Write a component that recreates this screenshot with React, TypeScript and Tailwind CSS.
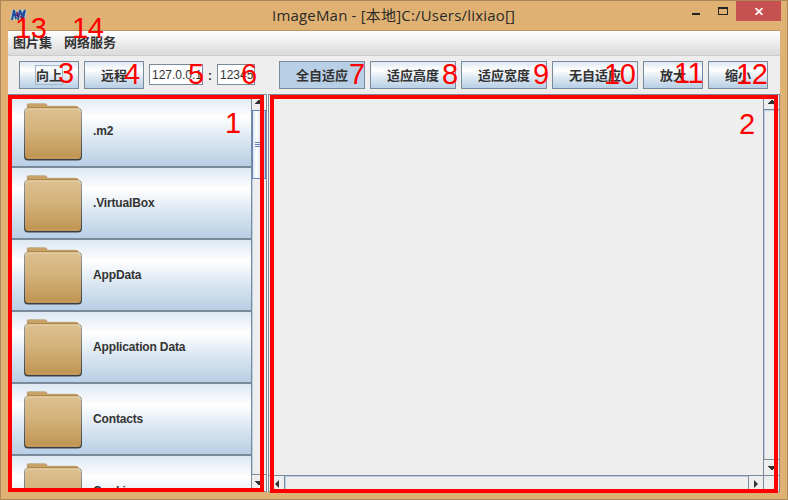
import React from "react";

const GRAD =
  "bg-[linear-gradient(to_bottom,#dde8f3_0%,#ffffff_30%,#dde8f3_60%,#b8cfe5_100%)]";

function ToolButton({ label, width, active, focus }: { label: string; width: string; active?: boolean; focus?: boolean }) {
  return (
    <button
      className={`flex h-7 shrink-0 items-center justify-center border border-[#7a8a99] ${width} ${active ? "bg-[#b8cfe5]" : GRAD}`}
    >
      <span className={focus ? "flex h-[18px] items-center outline outline-1 outline-[#a3b8cc]" : "flex h-[18px] items-center"}>{label}</span>
    </button>
  );
}

function Folder() {
  return (
    <svg width="62" height="62" viewBox="0 0 62 62" className="shrink-0">
      <defs>
        <linearGradient id="front" x1="0" y1="0" x2="0" y2="1">
          <stop offset="0" stopColor="#dcc08f" />
          <stop offset="0.45" stopColor="#d3b27b" />
          <stop offset="1" stopColor="#c09350" />
        </linearGradient>
        <linearGradient id="edge" x1="0" y1="0" x2="0" y2="1">
          <stop offset="0" stopColor="#8f969c" />
          <stop offset="1" stopColor="#2c3138" />
        </linearGradient>
        <filter id="soft" x="-10%" y="-10%" width="120%" height="120%">
          <feGaussianBlur stdDeviation="0.7" />
        </filter>
      </defs>
      <rect x="2" y="8" width="58" height="52.5" rx="4" fill="url(#edge)" opacity="0.9" filter="url(#soft)" />
      <path d="M5 11V5Q5 3.5 6.5 3.5H23Q25 3.5 25.5 6H54Q56 6 57 9V12H5Z" fill="#c8a369" stroke="#a99a7f" strokeOpacity="0.6" strokeWidth="0.6" />
      <path d="M5.5 7.5H56.5" stroke="#b18748" strokeWidth="1" />
      <rect x="3" y="8.5" width="56" height="50.5" rx="3.5" fill="url(#front)" />
      <path d="M3.5 12Q3.5 9 6.5 9H55.5Q58.5 9 58.5 12" fill="none" stroke="#ead5ae" strokeWidth="1" />
      <path d="M5 57.5H57" stroke="#c99d5d" strokeWidth="1" />
    </svg>
  );
}

function Arrow({ dir }: { dir: "up" | "down" | "left" | "right" }) {
  const paths = {
    up: "M4 0H5V1H6V2H7V3H8V4H0V3H1V2H2V1H3V0Z",
    down: "M0 0H8V1H7V2H6V3H5V4H3V3H2V2H1V1H0Z",
    left: "M0 4L4 0V8Z",
    right: "M4 4L0 0V8Z",
  };
  const flat = dir === "up" || dir === "down";
  return (
    <svg width={flat ? 8 : 4} height={flat ? 4 : 8} className="shrink-0">
      <path d={paths[dir]} fill="#333333" />
    </svg>
  );
}

const folders = [".m2", ".VirtualBox", "AppData", "Application Data", "Contacts", "Cookies"];

const marks = [
  { text: "13", place: "left-[15px] top-[12px]" },
  { text: "14", place: "left-[72px] top-[12px]" },
  { text: "3", place: "left-[58px] top-[57px]" },
  { text: "4", place: "left-[124px] top-[58px]" },
  { text: "5", place: "left-[188px] top-[58px]" },
  { text: "6", place: "left-[241px] top-[58px]" },
  { text: "7", place: "left-[349px] top-[58px]" },
  { text: "8", place: "left-[442px] top-[58px]" },
  { text: "9", place: "left-[533px] top-[58px]" },
  { text: "10", place: "left-[604px] top-[58px]" },
  { text: "11", place: "left-[674px] top-[57px]" },
  { text: "12", place: "left-[736px] top-[58px]" },
  { text: "1", place: "left-[225px] top-[107px]" },
  { text: "2", place: "left-[739px] top-[108px]" },
];

export default function App() {
  return (
    <div className="relative flex h-[500px] w-[788px] flex-col overflow-hidden border border-[#ab8757] bg-[#dfb274] px-[7px] pb-[7px] font-['Liberation_Sans','Noto_Sans_CJK_SC',sans-serif] text-[13px] font-bold leading-none text-[#333333]">
      <header className="flex h-[29px] shrink-0 items-start font-normal">
        <svg width="19" height="16" viewBox="0 0 19 16" className="ml-[1px] mt-[6px]">
          <path d="M3 13L5 3M5 3L7 12M9 13L11 3M3 8H9M11 3L13 9L16 3L14 12" stroke="#b3cfd2" strokeWidth="4" fill="none" />
          <path d="M3 13L5 3M5 3L7 12M9 13L11 3M3 8H9M11 3L13 9L16 3L14 12" stroke="#244c9a" strokeWidth="1.9" fill="none" />
          <path d="M8 5L9 10M12 9L13 12" stroke="#6d1b66" strokeWidth="1.8" />
          <path d="M10 12L12 13" stroke="#e0cf58" strokeWidth="1.2" />
        </svg>
        <div className="ml-[244px] mt-1 w-[250px] whitespace-nowrap font-['Open_Sans','Noto_Sans_CJK_SC',sans-serif] text-[15px] leading-5 tracking-[0.19px] text-[#2b2927]">
          ImageMan - [本地]C:/Users/lixiao[]
        </div>
        <div className="ml-auto flex h-5 items-start">
          <span className="mr-[18px] mt-3 h-0.5 w-2 bg-[#222]" />
          <span className="mr-2 mt-[6px] h-2 w-[10px] border border-t-2 border-[#222]" />
          <span className="mr-[-1px] flex h-5 w-[45px] items-center justify-center bg-[#c75050]">
            <svg width="8" height="7" viewBox="0 0 8 7">
              <path d="M0.5 0L7.5 7M7.5 0L0.5 7" stroke="#fff" strokeWidth="1.7" />
            </svg>
          </span>
        </div>
      </header>

      <div className="flex min-h-0 grow flex-col border border-x-0 border-b-0 border-[#bd965f] bg-[#eeeeee]">
        <nav className="flex h-[25px] shrink-0 gap-3 border-b border-[#cccccc] bg-gradient-to-b from-white to-[#dadada] pl-[5px] pt-[5px]">
          <span>图片集</span>
          <span>网络服务</span>
        </nav>
        <div className="flex h-[38px] shrink-0 pl-[11px] pt-[5px]">
          <ToolButton label="向上" width="w-[60px]" focus />
          <div className="w-[5px] shrink-0" />
          <ToolButton label="远程" width="w-[60px]" />
          <div className="ml-[5px] mt-[3px] flex h-[21px] w-[54px] shrink-0 items-center overflow-hidden border border-[#7a8a99] bg-white pl-[2px] text-xs font-normal">127.0.0.1</div>
          <span className="w-[14px] shrink-0 pt-[7px] text-center text-xs">:</span>
          <div className="mt-[3px] flex h-[21px] w-[38px] shrink-0 items-center overflow-hidden border border-[#7a8a99] bg-white pl-[2px] text-xs font-normal">12345</div>
          <div className="ml-6 flex gap-[5px]">
            <ToolButton label="全自适应" width="w-[86px]" active />
            <ToolButton label="适应高度" width="w-[86px]" />
            <ToolButton label="适应宽度" width="w-[86px]" />
            <ToolButton label="无自适应" width="w-[86px]" />
            <ToolButton label="放大" width="w-[60px]" />
            <ToolButton label="缩小" width="w-[60px]" />
          </div>
        </div>

        <div className="flex min-h-0 grow">
          <section className="flex w-[259px] shrink-0 border border-[#7a8a99]">
            <div className="w-[242px] overflow-hidden">
              {folders.map((name) => (
                <div key={name} className={`flex h-[72px] items-center border-y border-[#7a8a99] pl-[13px] text-xs ${GRAD}`}>
                  <Folder />
                  <span className="ml-[9px] whitespace-nowrap tracking-[-0.15px]">{name}</span>
                </div>
              ))}
            </div>
            <div className="flex grow flex-col border-l border-[#7a8a99]">
              <div className="flex h-[15px] shrink-0 items-center justify-center pb-0.5"><Arrow dir="up" /></div>
              <div className="flex h-[69px] shrink-0 flex-col items-center justify-center gap-px border border-[#6382bf] bg-[linear-gradient(to_right,#dde8f3,#ffffff_30%,#dde8f3_60%,#b8cfe5)]">
                <span className="h-px w-2 bg-[#6382bf]" />
                <span className="h-px w-2 bg-[#6382bf]" />
                <span className="h-px w-2 bg-[#6382bf]" />
              </div>
              <div className="grow border-l border-[#b8cfe5]" />
              <div className="flex h-[17px] shrink-0 items-center justify-center border-t border-[#7a8a99]"><Arrow dir="down" /></div>
            </div>
          </section>
          <div className="w-px shrink-0 bg-white" />
          <section className="flex min-w-0 grow flex-col border border-[#7a8a99]">
            <div className="flex min-h-0 grow">
              <div className="grow" />
              <div className="flex w-4 shrink-0 flex-col border-l border-[#7a8a99]">
                <div className="flex h-[15px] shrink-0 items-center justify-center border-b border-[#7a8a99]"><Arrow dir="up" /></div>
                <div className="grow border-l border-t border-[#b8cfe5]" />
                <div className="flex h-4 shrink-0 items-center justify-center border-t border-[#7a8a99]"><Arrow dir="down" /></div>
              </div>
            </div>
            <div className="flex h-4 shrink-0 border-t border-[#7a8a99]">
              <div className="flex w-4 items-center justify-center border-r border-[#7a8a99]"><Arrow dir="left" /></div>
              <div className="grow border-l border-t border-[#b8cfe5]" />
              <div className="flex w-4 items-center justify-center border-x border-[#7a8a99]"><Arrow dir="right" /></div>
              <div className="w-[15px]" />
            </div>
          </section>
        </div>
      </div>

      <div className="pointer-events-none absolute -left-px -top-px h-[500px] w-[788px] text-[29px] font-normal leading-8 tracking-[-0.5px] text-[#ff0000]">
        <div className="absolute left-2 top-[95px] h-[397px] w-64 border-4 border-[#ff0000]" />
        <div className="absolute left-[270px] top-[95px] h-[398px] w-[508px] border-4 border-[#ff0000]" />
        {marks.map((m) => (
          <span key={m.text} className={`absolute ${m.place}`}>{m.text}</span>
        ))}
      </div>
    </div>
  );
}
